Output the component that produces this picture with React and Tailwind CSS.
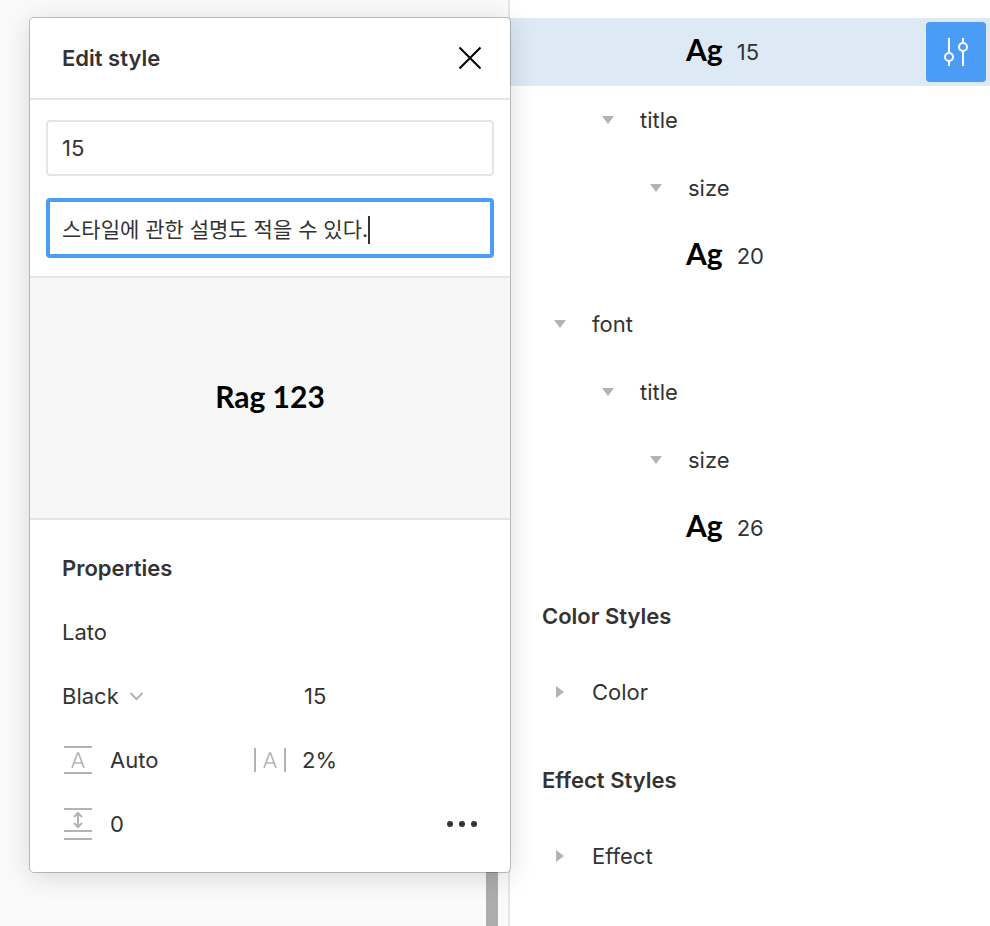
const TEXT_STYLES = [
  { type: 'folder', label: 'title', indent: 'pl-[82px]' },
  { type: 'folder', label: 'size', indent: 'pl-[130px]' },
  { type: 'style', label: '20' },
  { type: 'folder', label: 'font', indent: 'pl-[34px]' },
  { type: 'folder', label: 'title', indent: 'pl-[82px]' },
  { type: 'folder', label: 'size', indent: 'pl-[130px]' },
  { type: 'style', label: '26' },
]

export default function App() {
  return (
    <div className="flex min-h-screen bg-white font-['Inter','Noto_Sans_CJK_KR',sans-serif] text-[22px] leading-8 text-[#333333]">
      {/* Canvas */}
      <main className="relative flex min-w-0 flex-1 items-start justify-end bg-[#fafafa] pt-[18px]">
        <div className="absolute bottom-0 right-2.5 h-40 w-3 bg-[#adadad]" />
        <EditStyleDialog />
      </main>

      {/* Styles sidebar */}
      <aside className="w-[482px] shrink-0 border-l-2 border-[#e5e5e5] pt-[18px]">
        <div className="flex h-[68px] items-center justify-between bg-[#dde9f5] pr-1">
          <StyleName label="15" />
          <button type="button" aria-label="Edit style" className="flex size-[60px] items-center justify-center rounded bg-[#4b9cf5]">
            <SlidersIcon />
          </button>
        </div>
        {TEXT_STYLES.map((item, i) =>
          item.type === 'folder' ? (
            <Folder key={i} label={item.label} indent={item.indent} open />
          ) : (
            <div key={i} className="flex h-[68px] items-center">
              <StyleName label={item.label} />
            </div>
          ),
        )}

        <SectionTitle>Color Styles</SectionTitle>
        <Folder label="Color" indent="pl-[34px]" />

        <SectionTitle>Effect Styles</SectionTitle>
        <Folder label="Effect" indent="pl-[34px]" />
      </aside>
    </div>
  )
}

function EditStyleDialog() {
  return (
    <section
      role="dialog"
      aria-label="Edit style"
      className="z-10 -mr-0.5 w-[480px] rounded bg-white shadow-[0_4px_28px_rgba(0,0,0,0.15),0_0_0_1px_rgba(0,0,0,0.22)]"
    >
      <header className="flex h-[82px] items-center justify-between border-b-2 border-[#e5e5e5] pl-8 pr-6">
        <h2 className="font-semibold">Edit style</h2>
        <button type="button" aria-label="Close" className="flex size-8 items-center justify-center">
          <svg width="24" height="24" viewBox="0 0 24 24" fill="none" stroke="#000" strokeWidth="2">
            <path d="M1.5 1.5l21 21M22.5 1.5l-21 21" />
          </svg>
        </button>
      </header>

      <div className="flex flex-col border-b-2 border-[#e5e5e5] px-4 pb-[18px] pt-5">
        <input
          aria-label="Style name"
          defaultValue="15"
          className="h-14 w-full rounded border-2 border-[#e5e5e5] px-3.5 outline-none"
        />
        <label className="mt-[22px] flex h-[60px] items-center rounded border-4 border-[#4b9cf5] pl-3 pt-1">
          <input
            aria-label="Style description"
            defaultValue="스타일에 관한 설명도 적을 수 있다."
            className="field-sizing-content min-w-0 text-[21px] caret-transparent outline-none"
          />
          <span className="h-7 w-0.5 bg-[#333333]" />
        </label>
      </div>

      <div className="flex h-[242px] items-center justify-center border-b-2 border-[#e5e5e5] bg-[#f7f7f7] pb-1">
        <span className="font-['Lato',sans-serif] text-[30px] font-bold text-black">Rag 123</span>
      </div>

      <div className="px-8 py-4">
        <h3 className="flex h-16 items-center font-semibold">Properties</h3>
        <div className="flex h-16 items-center">
          <input aria-label="Font family" defaultValue="Lato" className="w-full outline-none" />
        </div>
        <div className="flex h-16 items-center">
          <label className="flex w-[242px] items-center gap-2.5">
            <select aria-label="Font weight" className="field-sizing-content appearance-none outline-none">
              <option>Black</option>
            </select>
            <svg width="16" height="10" viewBox="0 0 16 10" fill="none" stroke="#b3b3b3" strokeWidth="2">
              <path d="M1.500 2l6 6 6-6" />
            </svg>
          </label>
          <input aria-label="Font size" defaultValue="15" className="w-20 outline-none" />
        </div>
        <div className="flex h-16 items-center">
          <label className="flex w-48 items-center gap-4">
            <LineHeightIcon />
            <input aria-label="Line height" defaultValue="Auto" className="w-24 outline-none" />
          </label>
          <label className="flex items-center gap-4">
            <LetterSpacingIcon />
            <input aria-label="Letter spacing" defaultValue="2%" className="w-20 outline-none" />
          </label>
        </div>
        <div className="flex h-16 items-center justify-between">
          <label className="flex items-center gap-4">
            <ParagraphSpacingIcon />
            <input aria-label="Paragraph spacing" defaultValue="0" className="w-20 outline-none" />
          </label>
          <button type="button" aria-label="More options">
            <svg width="32" height="32" viewBox="0 0 32 32" fill="#333333">
              <circle cx="4" cy="16" r="3" />
              <circle cx="16" cy="16" r="3" />
              <circle cx="28" cy="16" r="3" />
            </svg>
          </button>
        </div>
      </div>
    </section>
  )
}

function SectionTitle({ children }) {
  return <h3 className="flex h-24 items-center pl-8 pt-3 font-semibold">{children}</h3>
}

function StyleName({ label }) {
  return (
    <div className="flex items-center gap-3.5 pl-44">
      <span className="pb-1.5 font-['Lato',sans-serif] text-[30px] font-bold text-black">Ag</span>
      <span>{label}</span>
    </div>
  )
}

function Folder({ label, indent, open }) {
  return (
    <button type="button" aria-expanded={!!open} className={`flex h-[68px] w-full items-center gap-4 text-left ${indent}`}>
      <svg width="32" height="32" viewBox="0 0 32 32" fill="#b3b3b3">
        <path d={open ? 'M10 12h12l-6 8z' : 'M12 10v12l8-6z'} />
      </svg>
      {label}
    </button>
  )
}

function SlidersIcon() {
  return (
    <svg width="32" height="32" viewBox="0 0 32 32" fill="none" stroke="#fff" strokeWidth="2">
      <path d="M9 2v15M9 25v5M23 2v5M23 15v15" />
      <circle cx="9" cy="21" r="4" />
      <circle cx="23" cy="11" r="4" />
    </svg>
  )
}

function LineHeightIcon() {
  return (
    <svg width="32" height="32" viewBox="0 0 32 32" fill="none" stroke="#b3b3b3" strokeWidth="2">
      <path d="M2 3h28M2 29h28" />
      <path d="M10 24l5.500-15h1l5.500 15M11.500 19h9" strokeWidth="1.700" />
    </svg>
  )
}

function LetterSpacingIcon() {
  return (
    <svg width="32" height="32" viewBox="0 0 32 32" fill="none" stroke="#b3b3b3" strokeWidth="2">
      <path d="M1 4v24M31 4v24" />
      <path d="M10 24l5.500-15h1l5.500 15M11.500 19h9" strokeWidth="1.700" />
    </svg>
  )
}

function ParagraphSpacingIcon() {
  return (
    <svg width="32" height="32" viewBox="0 0 32 32" fill="none" stroke="#b3b3b3" strokeWidth="2">
      <path d="M2 1h28M2 23h28M2 31h28" />
      <path d="M16 5v14M12 9l4-4 4 4M12 15l4 4 4-4" />
    </svg>
  )
}
